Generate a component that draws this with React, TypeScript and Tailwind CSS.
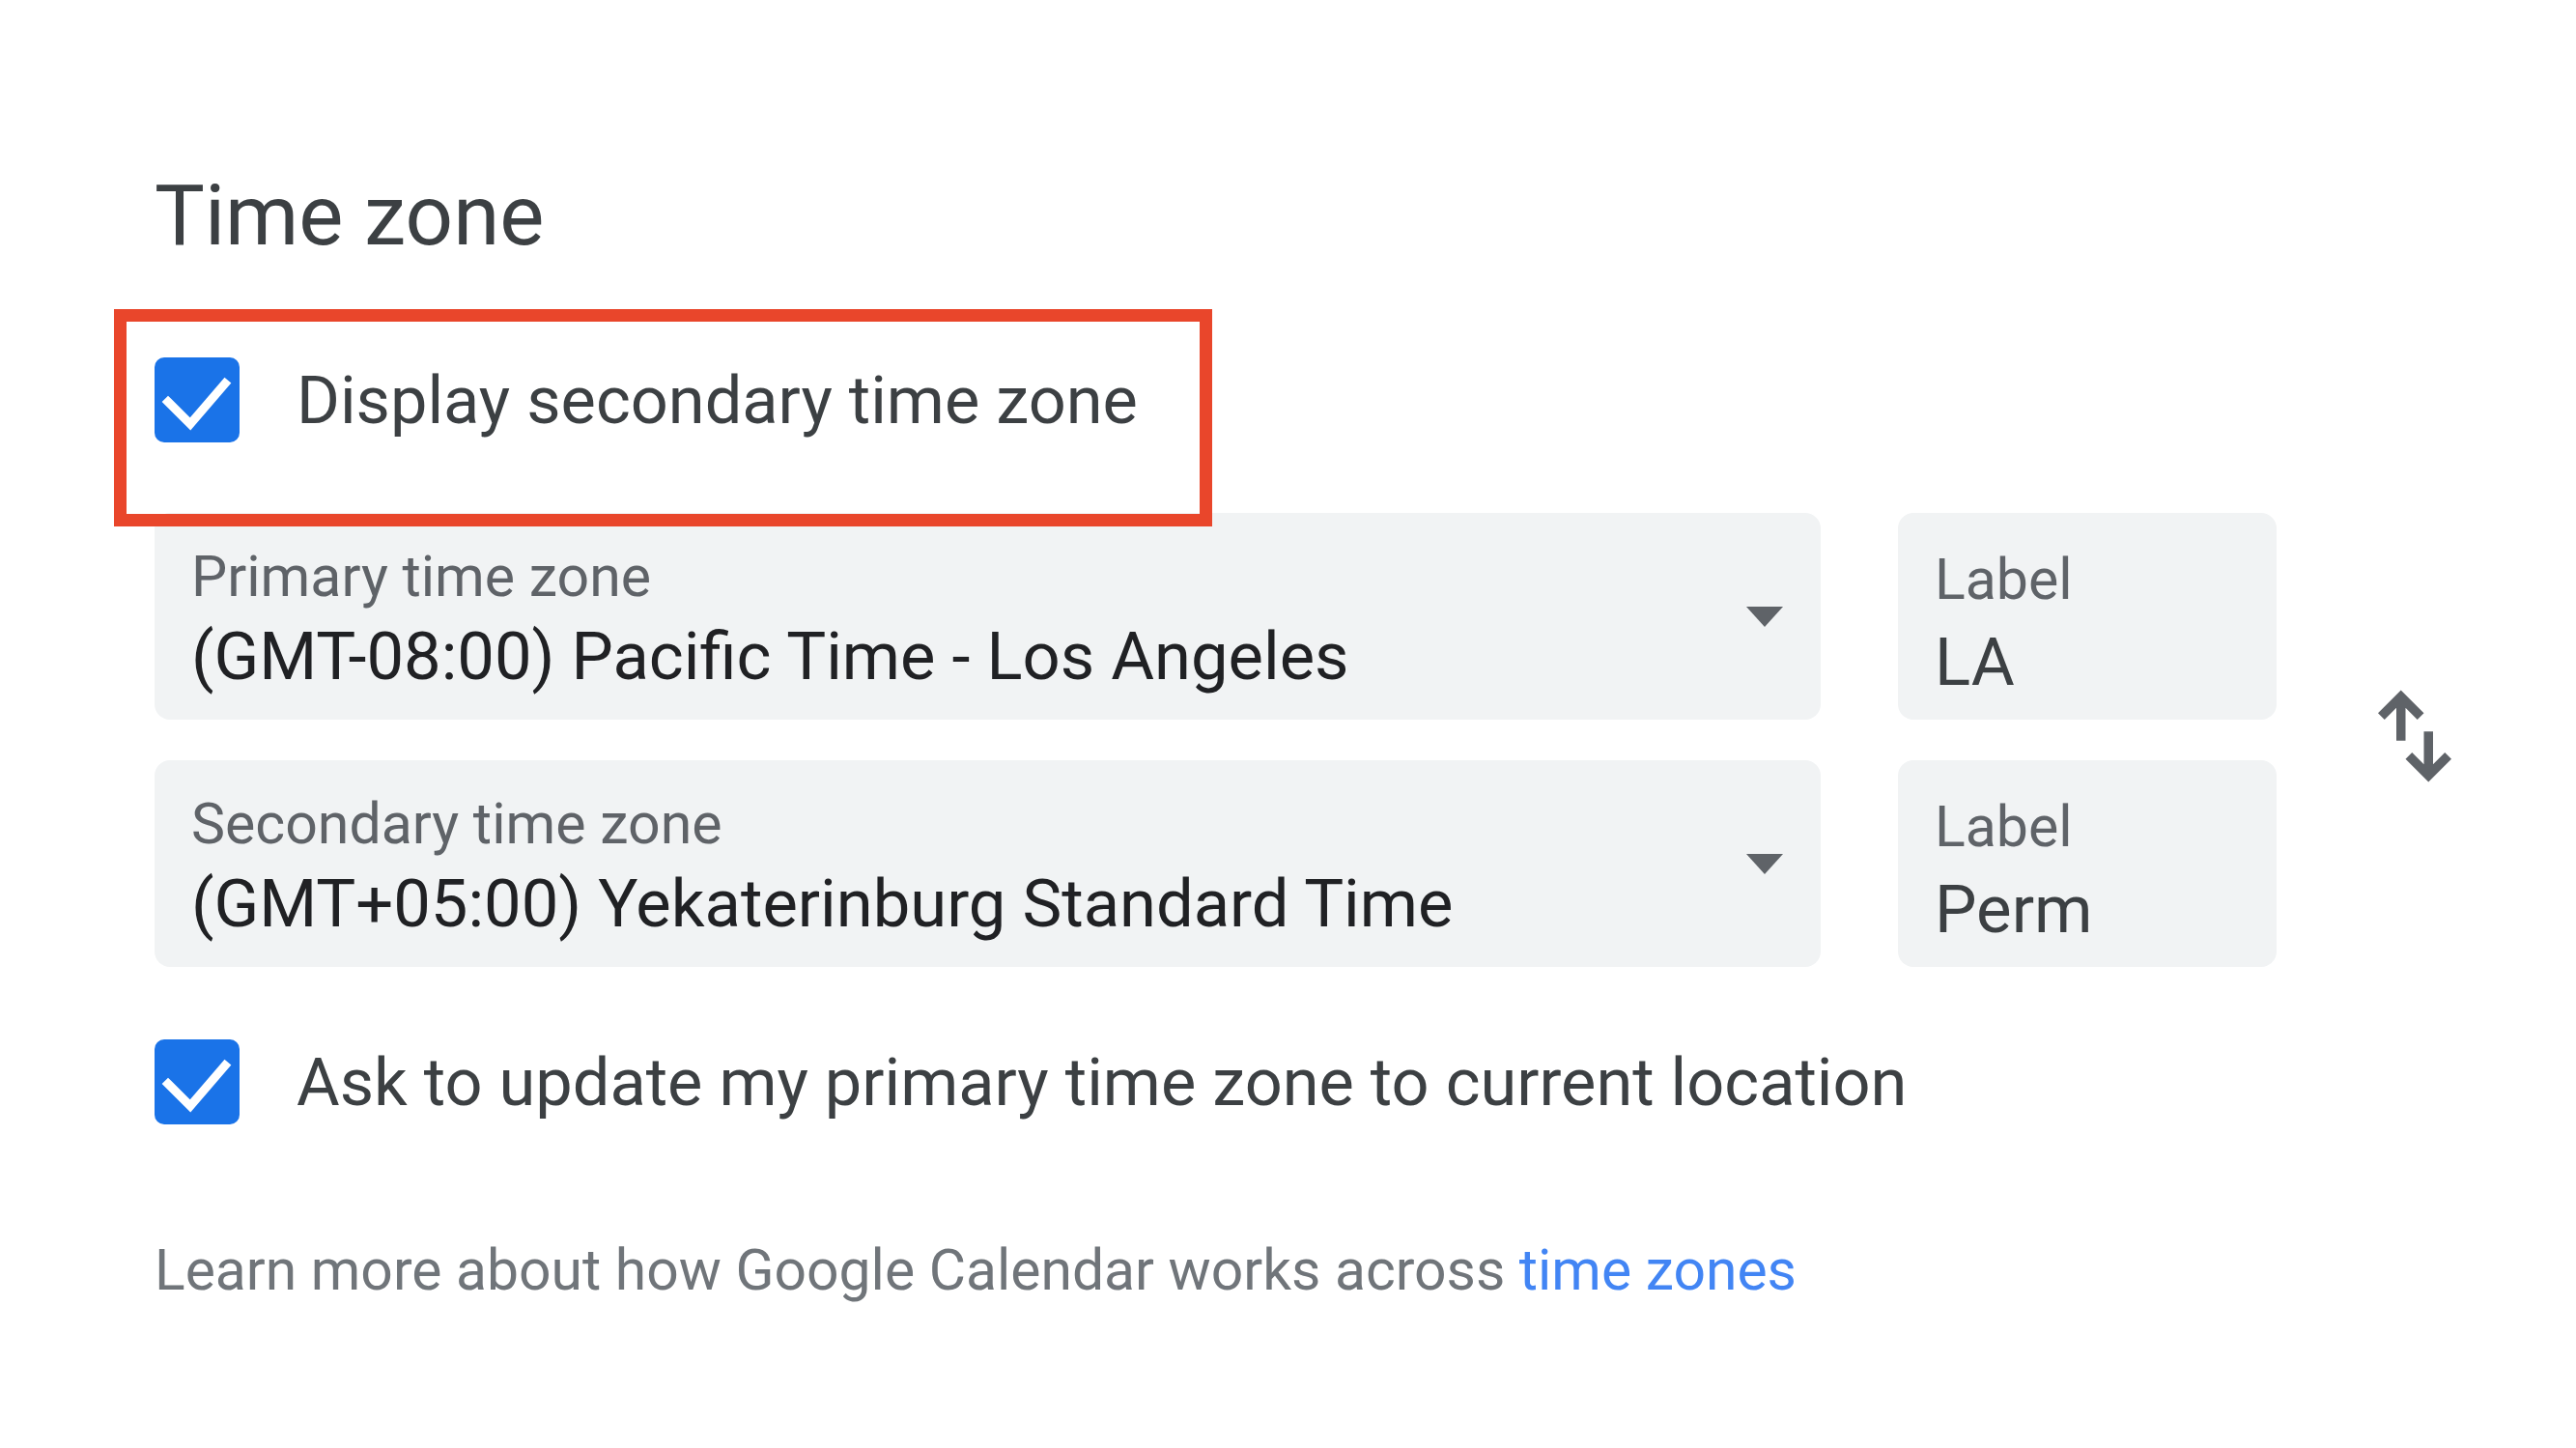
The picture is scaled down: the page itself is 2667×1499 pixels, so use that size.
import React from "react";

function CheckBox() {
  return (
    <div className="w-[88px] h-[88px] rounded-[10px] bg-[#1a73e8] shrink-0 flex items-center justify-center">
      <svg width="88" height="88" viewBox="0 0 88 88">
        <polyline points="14,46 37,69 73,27" fill="none" stroke="#ffffff" strokeWidth="9" strokeLinecap="square" />
      </svg>
    </div>
  );
}

function Caret() {
  return (
    <svg width="38" height="21" viewBox="0 0 38 21" className="shrink-0">
      <polygon points="0,0 38,0 19,21" fill="#5f6368" />
    </svg>
  );
}

function SelectBox({ label, value }: { label: string; value: string }) {
  return (
    <div className="w-[1725px] h-[214px] rounded-[16px] bg-[#f1f3f4] flex items-center pl-[38px] pr-[39px]">
      <div className="flex-1 flex flex-col mt-[6px]">
        <div className="text-[59px] leading-none text-[#5f6368]">{label}</div>
        <div className="text-[68.7px] leading-none text-[#202124] mt-[20px]">{value}</div>
      </div>
      <Caret />
    </div>
  );
}

function LabelBox({ value }: { value: string }) {
  return (
    <div className="w-[392px] h-[214px] rounded-[16px] bg-[#f1f3f4] flex flex-col pl-[38px] pt-[39px]">
      <div className="text-[59px] leading-none text-[#5f6368]">Label</div>
      <div className="text-[69px] leading-none text-[#3c4043] mt-[22px]">{value}</div>
    </div>
  );
}

export default function App() {
  return (
    <div
      className="w-full h-[1499px] bg-white pl-[160px] pt-[180px] flex flex-col"
      style={{ fontFamily: "Roboto, 'Liberation Sans', sans-serif" }}
    >
      <h1 className="text-[87px] leading-none text-[#3c4043] font-normal">Time zone</h1>

      <div className="relative mt-[103px] h-[88px] flex items-center gap-[59px]">
        <CheckBox />
        <span className="text-[68.5px] leading-none text-[#3c4043] mt-[2px]">Display secondary time zone</span>
        <div className="absolute left-[-42px] top-[-50px] w-[1137px] h-[225px] border-[13px] border-[#e9462b] pointer-events-none z-10" />
      </div>

      <div className="mt-[73px] flex items-center">
        <div className="flex flex-col gap-[42px]">
          <div className="flex gap-[80px]">
            <SelectBox label="Primary time zone" value="(GMT-08:00) Pacific Time - Los Angeles" />
            <LabelBox value="LA" />
          </div>
          <div className="flex gap-[80px]">
            <SelectBox label="Secondary time zone" value="(GMT+05:00) Yekaterinburg Standard Time" />
            <LabelBox value="Perm" />
          </div>
        </div>
        <svg width="114" height="114" viewBox="0 -960 960 960" className="ml-[86px] -mt-[8px]">
          <path
            d="M320-440v-287L217-624l-57-56 200-200 200 200-57 56-103-103v287h-80ZM600-80 400-280l57-56 103 103v-287h80v287l103-103 57 56L600-80Z"
            fill="#5f6368"
          />
        </svg>
      </div>

      <div className="mt-[75px] h-[88px] flex items-center gap-[59px]">
        <CheckBox />
        <span className="text-[68.5px] leading-none text-[#3c4043] mt-[2px]">Ask to update my primary time zone to current location</span>
      </div>

      <div className="mt-[122px] text-[58.8px] leading-none text-[#70757a]">
        Learn more about how Google Calendar works across <span className="text-[#4285f4]">time zones</span>
      </div>
    </div>
  );
}
